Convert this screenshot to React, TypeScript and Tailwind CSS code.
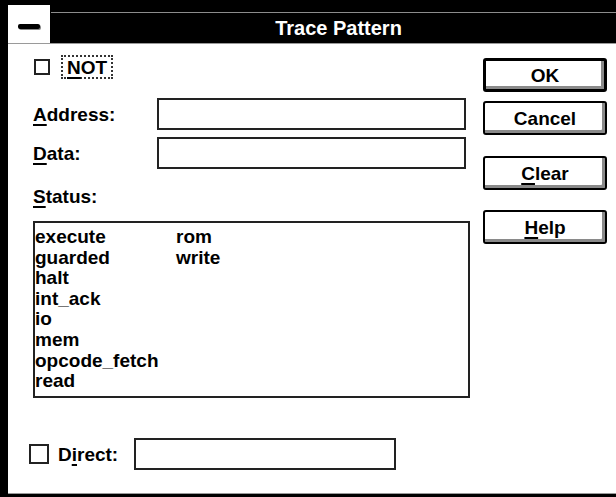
import type { ReactNode } from 'react';

const FONT = "font-['Liberation_Sans',Arial,sans-serif] font-bold";

const STATUS_LEFT = ['execute', 'guarded', 'halt', 'int_ack', 'io', 'mem', 'opcode_fetch', 'read'];
const STATUS_RIGHT = ['rom', 'write'];

// underlined mnemonic letter
function Mn({ children }: { children: ReactNode }) {
  return <span className="underline underline-offset-[3px] decoration-2">{children}</span>;
}

function CheckBox() {
  return <div className="w-[16px] h-[16px] border-2 border-[#222] bg-white shrink-0" />;
}

function Field({ className }: { className: string }) {
  return <div className={`h-[32px] border-2 border-[#222] bg-white ${className}`} />;
}

function Btn({ children, isDefault, className = '' }: { children: ReactNode; isDefault?: boolean; className?: string }) {
  return (
    <button
      type="button"
      className={`w-[124px] h-[34px] bg-white rounded-[3px] text-[19px] leading-none text-black ${isDefault ? 'border-[3px]' : 'border-2'} border-black shadow-[inset_-3px_-3px_0_#8a8a8a] ${className}`}
    >
      {children}
    </button>
  );
}

export default function App() {
  return (
    <div className={`w-[616px] h-[497px] bg-white overflow-hidden ${FONT}`}>
      <div className="h-full flex flex-col border-l-8 border-t-[5px] border-b-[3px] border-black">
        {/* Caption */}
        <div className="flex h-[39px] border-b border-[#9a9a9a]">
          <div className="w-[43px] bg-white flex items-center justify-center border-r border-black">
            <div className="w-[22px] h-[5px] rounded-[2px] bg-black shadow-[1px_1px_0_#888] mt-[4px]" />
          </div>
          <div className="flex-1 bg-black flex flex-col">
            <div className="h-[7px]" />
            <div className="h-px bg-[#8c8c8c]" />
            <div className="flex-1 flex items-center justify-center text-white text-[20px] pl-[10px]">
              Trace Pattern
            </div>
          </div>
        </div>

        {/* Body */}
        <div className="flex-1 flex border-b border-[#9a9a9a] text-[19px] leading-none text-black">
          <div className="w-[466px] pl-[25px] pt-[11px] flex flex-col">
            <div className="flex items-center h-[24px] gap-[11px] pl-[1px]">
              <CheckBox />
              <div className="h-[24px] px-[4px] flex items-center border-2 border-dotted border-[#333]">
                <Mn>N</Mn>OT
              </div>
            </div>

            <div className="flex items-center mt-[19px]">
              <div className="w-[124px]"><Mn>A</Mn>ddress:</div>
              <Field className="w-[309px]" />
            </div>
            <div className="flex items-center mt-[7px]">
              <div className="w-[124px]"><Mn>D</Mn>ata:</div>
              <Field className="w-[309px]" />
            </div>

            <div className="mt-[18px]"><Mn>S</Mn>tatus:</div>

            <div className="mt-[15px] w-[437px] h-[177px] border-2 border-[#222] flex pt-[4px] pl-0 leading-[20.6px]">
              <div className="w-[141px] flex flex-col">
                {STATUS_LEFT.map((s) => (
                  <div key={s}>{s}</div>
                ))}
              </div>
              <div className="flex flex-col">
                {STATUS_RIGHT.map((s) => (
                  <div key={s}>{s}</div>
                ))}
              </div>
            </div>

            <div className="flex items-center mt-[40px] gap-[9px]">
              <div className="-ml-[4px] w-[20px] h-[20px] border-2 border-[#222]" />
              <div className="w-[67px]">D<Mn>i</Mn>rect:</div>
              <Field className="w-[262px]" />
            </div>
          </div>

          <div className="pt-[14px] pl-[9px] flex flex-col">
            <Btn isDefault>OK</Btn>
            <Btn className="mt-[9px]">Cancel</Btn>
            <Btn className="mt-[21px]"><Mn>C</Mn>lear</Btn>
            <Btn className="mt-[20px]"><Mn>H</Mn>elp</Btn>
          </div>
        </div>
      </div>
    </div>
  );
}
